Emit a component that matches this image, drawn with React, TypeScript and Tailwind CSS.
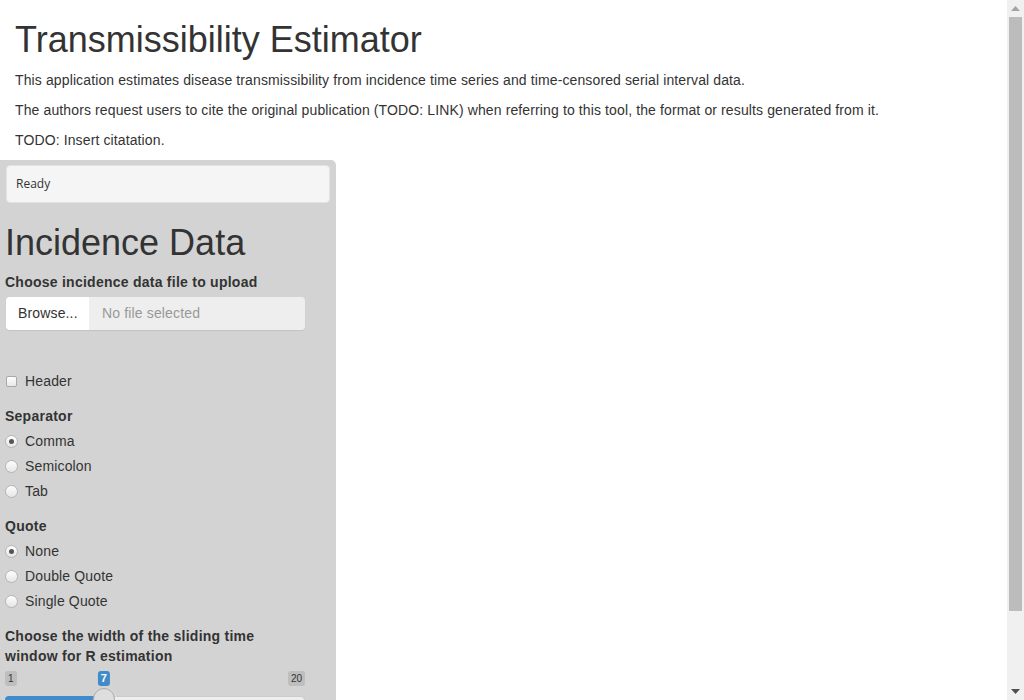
const font = { fontFamily: '"Liberation Sans", Arial, sans-serif' };

const Radio = ({ label, checked }: { label: string; checked?: boolean }) => (
  <div className="flex items-center h-5 mb-[5px]">
    <span className="w-[13px] h-[13px] rounded-full border border-[#b5b5b5] bg-gradient-to-b from-[#fdfdfd] to-[#e6e6e6] flex items-center justify-center ml-0">
      {checked && <span className="w-[5px] h-[5px] rounded-full bg-[#555]" />}
    </span>
    <span className="ml-[7px] text-[14px] tracking-[0.15px] text-[#333]">{label}</span>
  </div>
);

const Label = ({ children }: { children: React.ReactNode }) => (
  <div className="text-[14px] leading-5 font-bold tracking-[0.25px] text-[#333] mb-[5px]">{children}</div>
);

const Slider = () => {
  const min = 1;
  const max = 20;
  const value = 7;
  const pct = (value - min) / (max - min);
  const handleLeft = pct * 278;
  return (
    <div className="relative w-[300px] h-[40px]">
      <span className="absolute left-0 top-0 px-[3px] text-[10px] leading-[15px] rounded-[3px] bg-[#bebebe] text-[#333]">{min}</span>
      <span className="absolute right-0 top-0 px-[3px] text-[10px] leading-[15px] rounded-[3px] bg-[#bebebe] text-[#333]">{max}</span>
      <span
        className="absolute top-0 px-[3px] text-[11px] leading-[15px] font-bold rounded-[3px] bg-[#428bca] text-white -translate-x-1/2"
        style={{ left: handleLeft + 11 }}
      >
        {value}
      </span>
      <div className="absolute left-0 right-0 top-[25px] h-2 rounded-lg bg-[#eeeeee] border border-[#cccccc]" />
      <div className="absolute left-0 top-[25px] h-2 rounded-l-lg bg-[#428bca]" style={{ width: handleLeft + 11 }} />
      <div
        className="absolute top-[17px] w-[22px] h-[22px] rounded-full bg-[#dedede] border border-[#aaaaaa] shadow-[1px_1px_3px_rgba(255,255,255,0.3)]"
        style={{ left: handleLeft }}
      />
    </div>
  );
};

export default function App() {
  return (
    <div className="flex h-screen w-full overflow-hidden bg-white text-[#333]" style={font}>
      <div className="flex-1 min-w-0">
        <div className="px-[15px]">
          <h1 className="text-[36px] leading-[1.1] mt-5 mb-[10px] font-normal">Transmissibility Estimator</h1>
          <p className="text-[14px] leading-5 mb-[10px] tracking-[0.12px]">
            This application estimates disease transmissibility from incidence time series and time-censored serial interval data.
          </p>
          <p className="text-[14px] leading-5 mb-[10px] tracking-[0.12px]">
            The authors request users to cite the original publication (TODO: LINK) when referring to this tool, the format or results generated from it.
          </p>
          <p className="text-[14px] leading-5 mb-[10px] tracking-[0.12px]">TODO: Insert citatation.</p>
        </div>

        <div className="w-[336px] bg-[#d3d3d3] rounded-tr-[5px] px-[5px] pt-[5px] pb-10">
          <div className="mx-px h-[38px] bg-[#f5f5f5] border border-[#e3e3e3] rounded-[4px] flex items-center pl-[9px] text-[12px] text-[#333]" style={{ fontFamily: '"Open Sans", sans-serif' }}>
            Ready
          </div>

          <h1 className="text-[36px] leading-[1.1] mt-5 mb-[10px] font-normal">Incidence Data</h1>

          <Label>Choose incidence data file to upload</Label>
          <div className="flex w-[299px] ml-px h-[33px] mt-px rounded-[4px] shadow-[0_1px_1px_rgba(0,0,0,0.08)]">
            <div className="w-[83px] bg-white rounded-l-[4px] flex items-center pl-[12px] text-[14px] tracking-[0.15px] text-[#333]">Browse...</div>
            <div className="flex-1 bg-[#eeeeee] rounded-r-[4px] flex items-center pl-[13px] text-[14px] tracking-[0.15px] text-[#999]">No file selected</div>
          </div>

          <div className="h-[41px]" />

          <div className="flex items-center h-5 mb-[15px]">
            <span className="ml-px w-[11px] h-[11px] rounded-[2px] border border-[#a8a8a8] bg-gradient-to-b from-[#fdfdfd] to-[#e9e9e9]" />
            <span className="ml-[8px] text-[14px] tracking-[0.15px]">Header</span>
          </div>

          <Label>Separator</Label>
          <Radio label="Comma" checked />
          <Radio label="Semicolon" />
          <Radio label="Tab" />

          <div className="h-[10px]" />
          <Label>Quote</Label>
          <Radio label="None" checked />
          <Radio label="Double Quote" />
          <Radio label="Single Quote" />

          <div className="h-[10px]" />
          <div className="w-[300px]">
            <Label>Choose the width of the sliding time window for R estimation</Label>
          </div>
          <Slider />
        </div>
      </div>

      <div className="w-[17px] shrink-0 bg-[#f0f0f0] flex flex-col items-center">
        <div className="h-[17px] flex items-center justify-center">
          <svg width="9" height="5" viewBox="0 0 9 5"><path d="M4.5 0 L9 5 L0 5 Z" fill="#a3a3a3" /></svg>
        </div>
        <div className="w-[13px] h-[594px] bg-[#bcbcbc]" />
        <div className="flex-1" />
        <div className="h-[17px] flex items-center justify-center">
          <svg width="9" height="5" viewBox="0 0 9 5"><path d="M0 0 L9 0 L4.5 5 Z" fill="#505050" /></svg>
        </div>
      </div>
    </div>
  );
}
